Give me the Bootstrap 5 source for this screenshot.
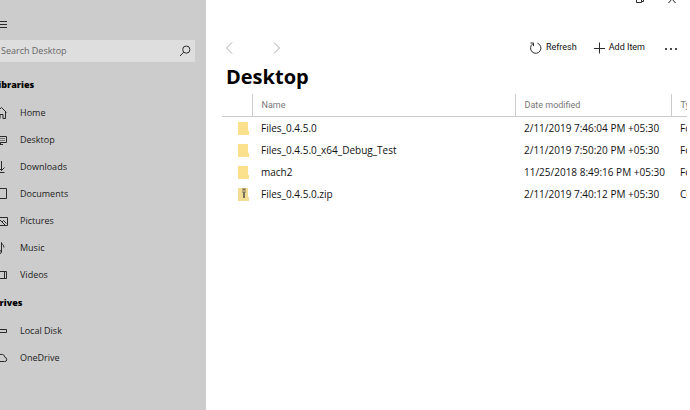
<!DOCTYPE html>
<html lang="en">
<head>
<meta charset="utf-8">
<meta name="viewport" content="width=device-width, initial-scale=1">
<title>Files - Desktop</title>
<link href="https://cdn.jsdelivr.net/npm/bootstrap@5.3.0/dist/css/bootstrap.min.css" rel="stylesheet">
<style>
body { font-family: "Open Sans", "Noto Sans", sans-serif; font-size: 10px; color: #111; background: #fff; }
svg { display: block; flex: none; fill: none; stroke: #2b2b2b; stroke-width: 1; }
.plain-btn { border: 0; background: none; padding: 0; color: #111; }
.side { flex: 0 0 206px; background: #ccc; font-size: 9px; }
.side-inner { margin-left: -10px; padding: 15px 11px 0 0; }
.find { background: #dedede; height: 22px; margin: 7px 0 12px; padding: 0 4px 0 11px; }
.find input { border: 0; background: none; padding: 0; min-width: 0; color: #333; }
.find input::placeholder { color: #666; opacity: 1; }
.group-title { font-size: 9px; font-weight: 800; line-height: 22px; margin: 0; padding-left: 3px; color: #000; }
.places li a { height: 27px; gap: 12px; color: #222; padding-left: 2px; }
.places { margin-bottom: 4px; padding-top: 3px; }
/* Main pane */
.pane { min-width: 0; margin-right: 3px; overflow: hidden; padding-left: 16px; }
.win { height: 15px; gap: 22px; padding-right: 10px; align-items: flex-start; }
.win svg { margin-top: -6px; }
.tools { height: 42px; padding: 24px 8px 0 3px; font-family: Roboto, sans-serif; font-size: 9px; }
.tools .arrow { margin-right: 40px; }
.tools .arrow svg { stroke: #aaa; }
.page-title { font-size: 20px; font-weight: 700; line-height: 30px; padding: 5px 0 2px 4px; margin: 0; color: #000; }
.files { table-layout: fixed; width: 100%; line-height: 22px; margin: 0; }
.files th, .files td { padding: 0 0 0 9px; white-space: nowrap; }
.files th { font-family: Roboto, sans-serif; font-size: 9px; font-weight: 400; color: #777; border-bottom: 1px solid #ccc; border-left: 1px solid #ccc; }
.files th:first-child { border-left: 0; }
.files td:first-child { padding-left: 16px; }
.files svg { stroke: none; }
.c-icon { width: 30px; }
.c-date { width: 156px; }
.c-type { width: 16px; }
</style>
<script src="https://cdn.jsdelivr.net/npm/bootstrap@5.3.0/dist/js/bootstrap.bundle.min.js"></script>
</head>
<body>
<div class="d-flex min-vh-100 overflow-hidden">
  <aside class="side overflow-hidden">
    <div class="side-inner">
      <button class="plain-btn d-flex align-items-center" type="button" aria-label="Menu">
        <svg width="17" height="18" viewBox="0 0 17 18"><path d="M5 6.500h12M5 9.500h12M5 12.500h12"/></svg>
      </button>
      <form class="find d-flex align-items-center" role="search">
        <input class="flex-grow-1" type="text" placeholder="Search Desktop" aria-label="Search Desktop">
        <button class="plain-btn" type="button" aria-label="Search">
          <svg width="12" height="12" viewBox="0 0 12 12"><circle cx="7.300" cy="4.600" r="3.600"/><path d="M4.700 7.200L1 11"/></svg>
        </button>
      </form>
      <h2 class="group-title">Libraries</h2>
      <ul class="places list-unstyled">
        <li><a class="d-flex align-items-center text-decoration-none" href="#home"><svg width="16" height="14" viewBox="0 0 16 14"><path d="M4 6.500l5.500-5 5 5M5.500 5.500v7h2.500V8.500h3v4h2.500V5.500"/></svg>Home</a></li>
        <li><a class="d-flex align-items-center text-decoration-none" href="#desktop"><svg width="16" height="14" viewBox="0 0 16 14"><path d="M1.500 3.500h13v6h-13zM6 11.500h5M8.500 10v2"/><path stroke="#777" d="M8 5.500h5M8 7.500h5"/></svg>Desktop</a></li>
        <li><a class="d-flex align-items-center text-decoration-none" href="#downloads"><svg width="16" height="14" viewBox="0 0 16 14"><path d="M9.500 1v9.500M6 7l3.500 3.500L12.500 7.500M6 12.500h6.500"/></svg>Downloads</a></li>
        <li><a class="d-flex align-items-center text-decoration-none" href="#documents"><svg width="16" height="14" viewBox="0 0 16 14"><path d="M3.500 1.500h11v10h-11z"/></svg>Documents</a></li>
        <li><a class="d-flex align-items-center text-decoration-none" href="#pictures"><svg width="16" height="14" viewBox="0 0 16 14"><path d="M1.500 3.500h14v8h-14zM3 10l5-4 5 5M10 8l1.500-1.500 3 3"/></svg>Pictures</a></li>
        <li><a class="d-flex align-items-center text-decoration-none" href="#music"><svg width="16" height="14" viewBox="0 0 16 14"><path d="M9.500 11V1.500c0 2 2.500 2 2.500 5"/><ellipse cx="7.500" cy="11" rx="2" ry="1.500"/></svg>Music</a></li>
        <li><a class="d-flex align-items-center text-decoration-none" href="#videos"><svg width="16" height="14" viewBox="0 0 16 14"><path d="M1.500 3.500h13v7h-13zM12.500 3.500v7"/></svg>Videos</a></li>
      </ul>
      <h2 class="group-title">Drives</h2>
      <ul class="places list-unstyled">
        <li><a class="d-flex align-items-center text-decoration-none" href="#local"><svg width="16" height="14" viewBox="0 0 16 14"><path d="M1.500 5.500h13v3h-13z"/></svg>Local Disk</a></li>
        <li><a class="d-flex align-items-center text-decoration-none" href="#onedrive"><svg width="16" height="14" viewBox="0 0 16 14"><path d="M4 10.500h8.500a2 2 0 0 0 .5-4 3.500 3.500 0 0 0-6.500-1.500 2.800 2.800 0 0 0-2.500 5.500z"/></svg>OneDrive</a></li>
      </ul>
    </div>
  </aside>
  <main class="pane flex-grow-1">
    <div class="win d-flex justify-content-end">
      <button class="plain-btn" type="button" aria-label="Restore"><svg width="10" height="10" viewBox="0 0 10 10"><path d="M1.500 3.500h5v5h-5zM3 3V1.500h5.500v6H7"/></svg></button>
      <button class="plain-btn" type="button" aria-label="Close"><svg width="10" height="10" viewBox="0 0 10 10"><path d="M1.500 1l7 8M8.500 1l-7 8"/></svg></button>
    </div>
    <div class="tools d-flex align-items-center">
      <button class="plain-btn arrow" type="button" aria-label="Back"><svg width="8" height="14" viewBox="0 0 8 14"><path d="M7 1.500L1.500 7 7 12.500"/></svg></button>
      <button class="plain-btn arrow" type="button" aria-label="Forward"><svg width="8" height="14" viewBox="0 0 8 14"><path d="M1 1.500L6.500 7 1 12.500"/></svg></button>
      <div class="ms-auto d-flex align-items-center gap-3">
        <button class="plain-btn d-flex align-items-center gap-1" type="button"><svg width="13" height="14" viewBox="0 0 13 14"><path d="M3.800 2.800a5.200 5.200 0 1 0 4.700-.6M1.500 2h3v3"/></svg>Refresh</button>
        <button class="plain-btn d-flex align-items-center gap-1" type="button"><svg width="12" height="14" viewBox="0 0 12 14"><path d="M6.500 1.500v11M1 7.500h11"/></svg>Add Item</button>
        <button class="plain-btn" type="button" aria-label="More"><svg width="18" height="14" viewBox="0 0 18 14"><g fill="#111" stroke="none"><circle cx="5" cy="8" r="1"/><circle cx="10" cy="8" r="1"/><circle cx="15" cy="8" r="1"/></g></svg></button>
      </div>
    </div>
    <h1 class="page-title">Desktop</h1>
    <table class="files">
      <colgroup><col class="c-icon"><col><col class="c-date"><col class="c-type"></colgroup>
      <thead>
        <tr><th></th><th scope="col">Name</th><th scope="col">Date modified</th><th scope="col">Type</th></tr>
      </thead>
      <tbody>
        <tr><td><svg width="11" height="13" viewBox="0 0 11 13"><path fill="#fbe08e" d="M0 0h10v9h1v4H0z"/></svg></td><td>Files_0.4.5.0</td><td>2/11/2019 7:46:04 PM +05:30</td><td>Folder</td></tr>
        <tr><td><svg width="11" height="13" viewBox="0 0 11 13"><path fill="#fbe08e" d="M0 0h10v9h1v4H0z"/></svg></td><td>Files_0.4.5.0_x64_Debug_Test</td><td>2/11/2019 7:50:20 PM +05:30</td><td>Folder</td></tr>
        <tr><td><svg width="11" height="13" viewBox="0 0 11 13"><path fill="#fbe08e" d="M0 0h10v9h1v4H0z"/></svg></td><td>mach2</td><td>11/25/2018 8:49:16 PM +05:30</td><td>Folder</td></tr>
        <tr><td><svg width="11" height="13" viewBox="0 0 11 13"><path fill="#f3dc94" d="M0 0h10v9h1v4H0z"/><path fill="#b9a878" d="M4 0h4v5H4z"/><path fill="#77705a" d="M5 1h2v1H5zM5 4h2v6H5z"/></svg></td><td>Files_0.4.5.0.zip</td><td>2/11/2019 7:40:12 PM +05:30</td><td>Compressed</td></tr>
      </tbody>
    </table>
  </main>
</div>
</body>
</html>
